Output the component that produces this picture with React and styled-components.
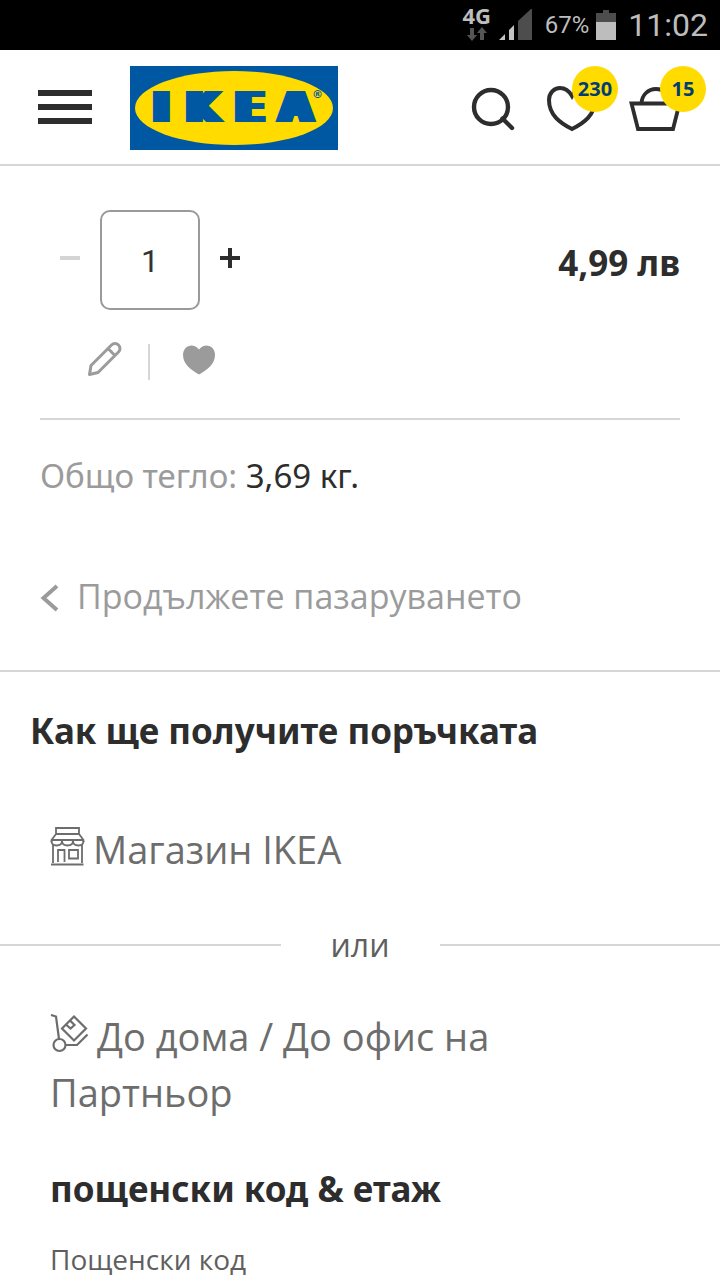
import React from "react";
import styled, { createGlobalStyle } from "styled-components";

const Global = createGlobalStyle`
  *, *::before, *::after { box-sizing: border-box; }
  html, body { margin: 0; background: #fff; }
  body {
    font-family: "Open Sans", "Noto Sans", sans-serif;
    color: #2d2d2d;
  }
  button { font: inherit; color: inherit; background: none; border: 0; padding: 0; cursor: pointer; }
  h1, h2, h3, p { margin: 0; }
  svg { display: block; }
`;

const Page = styled.div`
  display: flex;
  flex-direction: column;
  height: 100vh;
`;

const Content = styled.main`
  flex: 1;
  min-height: 0;
  overflow-y: auto;
  scrollbar-width: none;
`;

const StatusBar = styled.div`
  display: flex;
  flex: none;
  align-items: center;
  justify-content: flex-end;
  height: 50px;
  padding: 0 12px;
  background: #000;
  color: #bdbdbd;
  font-family: Roboto, sans-serif;
`;

const Network = styled.div`
  display: flex;
  flex-direction: column;
  align-items: center;
  gap: 2px;
  width: 28px;
  margin-right: 8px;
  padding-bottom: 4px;
  font: 700 22px/20px "Noto Sans", sans-serif;
`;

const Percent = styled.span`
  margin: 0 7px 0 13px;
  font-size: 24px;
  line-height: 24px;
`;

const Clock = styled.time`
  margin-left: 12px;
  font-size: 32px;
  line-height: 40px;
`;

const Header = styled.header`
  display: flex;
  flex: none;
  align-items: center;
  height: 116px;
  padding: 2px 40px 0 38px;
  border-bottom: 2px solid #d6d6d6;
`;

const MenuButton = styled.button`
  display: flex;
  flex-direction: column;
  gap: 8px;
  width: 54px;
  margin: 0 38px 2px 0;
`;

const MenuLine = styled.span`
  height: 6px;
  background: #2d2d2d;
`;

const Actions = styled.nav`
  display: flex;
  align-items: center;
  margin-left: auto;
  padding-top: 2px;
  gap: 32px;
`;

const Action = styled.button`
  position: relative;
`;

const Badge = styled.span`
  position: absolute;
  top: -20px;
  left: ${(p) => p.$left}px;
  width: 46px;
  height: 46px;
  border-radius: 50%;
  background: #ffdb00;
  color: #003e72;
  font-size: 20px;
  font-weight: 700;
  line-height: 46px;
  text-align: center;
`;

const Cart = styled.section`
  padding: 44px 40px 50px;
  border-bottom: 2px solid #d6d6d6;
`;

const ItemRow = styled.div`
  display: flex;
  align-items: center;
  justify-content: space-between;
`;

const Stepper = styled.div`
  display: flex;
  align-items: center;
`;

const StepButton = styled.button`
  display: flex;
  align-items: center;
  justify-content: center;
  width: 60px;
  height: 60px;
  padding-bottom: 4px;
  color: ${(p) => (p.disabled ? "#d4d4d4" : "#2d2d2d")};
`;

const Quantity = styled.input`
  width: 100px;
  height: 100px;
  padding: 2px 0 0;
  border: 2px solid #9a9a9a;
  border-radius: 10px;
  background: #fff;
  color: #333;
  font: 32px Roboto, sans-serif;
  text-align: center;
`;

const Price = styled.strong`
  padding-top: 6px;
  font-family: "Noto Sans", sans-serif;
  font-size: 35px;
  line-height: 48px;
`;

const Tools = styled.div`
  display: flex;
  align-items: center;
  height: 110px;
  padding: 0 0 8px 46px;
  border-bottom: 2px solid #d6d6d6;
  color: #9b9b9b;
`;

const Divider = styled.span`
  width: 2px;
  height: 36px;
  margin: 4px 33px 0 26px;
  background: #d6d6d6;
`;

const Weight = styled.p`
  margin-top: 32px;
  font-family: "Noto Sans", sans-serif;
  font-size: 33px;
  line-height: 48px;
  color: #9b9b9b;
  span { color: #2d2d2d; }
`;

const BackLink = styled.a`
  display: flex;
  align-items: center;
  gap: 18px;
  margin-top: 72px;
  color: #9b9b9b;
  font-size: 34px;
  line-height: 48px;
  text-decoration: none;
  svg { margin-top: 4px; }
`;

const Delivery = styled.section`
  padding: 35px 0 48px;
`;

const Heading = styled.h2`
  padding: 0 30px;
  font-family: "Noto Sans", sans-serif;
  font-size: 35px;
  line-height: 48px;
`;

const Option = styled.button`
  display: block;
  width: 100%;
  padding: 0 180px 0 50px;
  color: #6d6d6d;
  font-size: 38px;
  line-height: 56px;
  text-align: left;
  svg { display: inline-block; margin-right: 8px; vertical-align: -3px; }
`;

const StoreOption = styled(Option)`
  margin-top: 66px;
`;

const Or = styled.div`
  display: flex;
  align-items: center;
  gap: 50px;
  margin: 41px 0 36px;
  color: #5f5f5f;
  font-size: 32px;
  line-height: 54px;
  &::before, &::after {
    content: "";
    flex: 1;
    height: 2px;
    background: #d6d6d6;
  }
`;

const Form = styled.form`
  padding: 45px 50px 0;
`;

const FormTitle = styled.h3`
  font-family: "Noto Sans", sans-serif;
  font-size: 35px;
  line-height: 48px;
`;

const Label = styled.label`
  display: block;
  margin-top: 26px;
  color: #5f5f5f;
  font-size: 28px;
  line-height: 40px;
`;

const Field = styled.input`
  width: 100%;
  height: 80px;
  margin-top: 12px;
  padding: 0 20px;
  border: 2px solid #9a9a9a;
  border-radius: 10px;
  font-size: 28px;
`;

const Wordmark = styled.text`
  font: 700 42px "DejaVu Sans", sans-serif;
  text-shadow: -5px 0, -4px 0, -3px 0, -2px 0, -1px 0, 1px 0, 2px 0, 3px 0, 4px 0;
  color: #0058a3;
  fill: #0058a3;
`;

const Registered = styled.text`
  font: 700 11px "DejaVu Sans", sans-serif;
  fill: #0058a3;
`;

const Arrows = () => (
  <svg width="20" height="14" viewBox="0 0 20 14" fill="#555" aria-hidden="true">
    <path d="M3 1h4v7h3l-5 6-5-6h3zM13 13h4V6h3l-5-6-5 6h3z" />
  </svg>
);

const Signal = () => (
  <svg width="33" height="32" viewBox="0 0 33 32" aria-hidden="true">
    <path d="M0 31l6-6v6zM10 21l5-5v15h-5z" fill="#c4c4c4" />
    <path d="M19 12L33 -1v32H19z" fill="#4d4d4d" />
  </svg>
);

const Battery = () => (
  <svg width="20" height="30" viewBox="0 0 20 30" aria-hidden="true">
    <path d="M7 0h6v3h7v9H0V3h7z" fill="#4d4d4d" />
    <path d="M0 12h20v18H0z" fill="#bdbdbd" />
  </svg>
);

const Logo = () => (
  <svg width="208" height="84" viewBox="0 0 208 84" role="img" aria-label="IKEA">
    <rect width="208" height="84" fill="#0058a3" />
    <ellipse cx="104" cy="42" rx="99" ry="37" fill="#ffdb00" />
    <Wordmark x="24 57 106 150" y="56">IKEA</Wordmark>
    <Registered x="182" y="32">®</Registered>
  </svg>
);

const Search = () => (
  <svg width="44" height="44" viewBox="0 0 44 44" fill="none" stroke="#2d2d2d" strokeWidth="4.4" aria-hidden="true">
    <circle cx="20" cy="20" r="17" />
    <path d="M31.5 31.5L41 41" strokeLinecap="round" />
  </svg>
);

const HeartOutline = () => (
  <svg width="50" height="46" viewBox="0 0 50 46" fill="none" stroke="#2d2d2d" strokeWidth="4" aria-hidden="true">
    <path d="M25 10C21 3 16 2 13 2 7 2 2 7 2 14c0 15 11 23 23 29 12-6 23-14 23-29 0-7-5-12-11-12-3 0-8 1-12 8z" />
  </svg>
);

const Basket = () => (
  <svg width="51" height="46" viewBox="0 0 51 46" fill="none" stroke="#2d2d2d" strokeWidth="3.8" aria-hidden="true">
    <path d="M2.5 17.5h48L44 43H9z" />
    <path d="M12.500 17C13 9 19 3 27 3s13 6 14 14" />
  </svg>
);

const Minus = () => (
  <svg width="20" height="20" viewBox="0 0 20 20" stroke="currentColor" strokeWidth="4" aria-hidden="true">
    <path d="M0 10h20" />
  </svg>
);

const Plus = () => (
  <svg width="20" height="20" viewBox="0 0 20 20" stroke="currentColor" strokeWidth="4" aria-hidden="true">
    <path d="M0 10h20M10 0v20" />
  </svg>
);

const Pencil = () => (
  <svg width="36" height="36" viewBox="0 0 36 36" fill="none" stroke="currentColor" strokeWidth="3" strokeLinejoin="round" aria-hidden="true">
    <path d="M3.500 32.500L5 23.500 25.500 3c2-2 5-2 7 0s2 5 0 7L12 30.500zM22 6.500l7 7" />
  </svg>
);

const HeartSolid = () => (
  <svg width="32" height="30" viewBox="0 0 32 30" fill="currentColor" aria-hidden="true">
    <path d="M16 4.500C12 0 8 0 6 1 2 2 0 6 0 10c0 9 8 15 16 19.500C24 25 32 19 32 10c0-4-2-8-6-9-2-1-6-1-10 3.500z" />
  </svg>
);

const Back = () => (
  <svg width="19" height="28" viewBox="0 0 19 28" fill="none" stroke="currentColor" strokeWidth="4" aria-hidden="true">
    <path d="M17 2L3.500 14 17 26" />
  </svg>
);

const Store = () => (
  <svg width="35" height="40" viewBox="0 0 35 40" fill="none" stroke="currentColor" strokeWidth="1.800" aria-hidden="true">
    <path d="M6 7V1h23v6M6 7h23l4.500 6v2M6 7l-4.500 6v2M3 18v18M32 18v18M1 37.500h32.500" />
    <path d="M1.500 13h32M1.500 14c0 4 3 4.500 5 4.500s5.500-.5 5.500-4.500c0 4 3 4.500 5.500 4.500S23 18 23 14c0 4 3 4.500 5.500 4.500s5-.5 5-4.500" />
    <path d="M8 35V23h6.500v12M19 23h9v8.500h-9z" />
  </svg>
);

const Trolley = () => (
  <svg width="39" height="40" viewBox="0 0 39 40" fill="none" stroke="currentColor" strokeWidth="2.200" aria-hidden="true">
    <path d="M1 1l5 1.500L9 25" />
    <circle cx="9.500" cy="31" r="6" />
    <path d="M16 31h11l10.500-10.500M24 2.500l12 12-12 12-12-12zM20 6.500l4.500 4.500-4 3.500-4.500-4" />
  </svg>
);

export default function App() {
  return (
    <>
      <Global />
      <Page>
        <StatusBar>
          <Network>4G<Arrows /></Network>
          <Signal />
          <Percent>67%</Percent>
          <Battery />
          <Clock>11:02</Clock>
        </StatusBar>
        <Header>
          <MenuButton aria-label="Меню"><MenuLine /><MenuLine /><MenuLine /></MenuButton>
          <Logo />
          <Actions>
            <Action aria-label="Търсене"><Search /></Action>
            <Action><HeartOutline /><Badge $left={25}>230</Badge></Action>
            <Action><Basket /><Badge $left={31}>15</Badge></Action>
          </Actions>
        </Header>
        <Content>
          <Cart>
            <ItemRow>
              <Stepper>
                <StepButton aria-label="Намали" disabled><Minus /></StepButton>
                <Quantity aria-label="Количество" defaultValue="1" />
                <StepButton aria-label="Увеличи"><Plus /></StepButton>
              </Stepper>
              <Price>4,99 лв</Price>
            </ItemRow>
            <Tools>
              <button aria-label="Редактирай"><Pencil /></button>
              <Divider />
              <button aria-label="Любими"><HeartSolid /></button>
            </Tools>
            <Weight>Общо тегло: <span>3,69 кг.</span></Weight>
            <BackLink href="#"><Back />Продължете пазаруването</BackLink>
          </Cart>
          <Delivery>
            <Heading>Как ще получите поръчката</Heading>
            <StoreOption><Store />Магазин IKEA</StoreOption>
            <Or>или</Or>
            <Option><Trolley />До дома / До офис на Партньор</Option>
            <Form>
              <FormTitle>пощенски код &amp; етаж</FormTitle>
              <Label htmlFor="postcode">Пощенски код</Label>
              <Field id="postcode" />
            </Form>
          </Delivery>
        </Content>
      </Page>
    </>
  );
}
